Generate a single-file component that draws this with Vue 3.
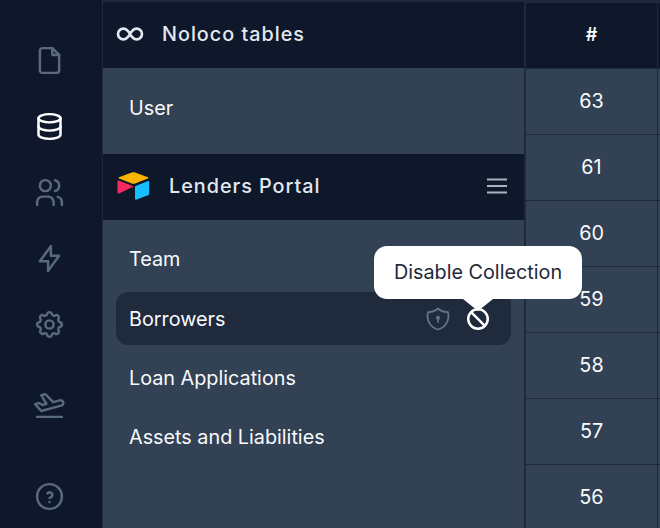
<script setup>
const rows = [63, 61, 60, 59, 58, 57, 56]
</script>

<template>
  <div class="app">
    <nav class="nav">
      <div class="slot">
        <svg class="ic" viewBox="0 0 24 24"><path d="M14 3v4a1 1 0 0 0 1 1h4" /><path d="M17 21h-10a2 2 0 0 1 -2 -2v-14a2 2 0 0 1 2 -2h7l5 5v11a2 2 0 0 1 -2 2z" /></svg>
      </div>
      <div class="slot active">
        <svg class="ic" viewBox="0 0 24 24"><ellipse cx="12" cy="6" rx="8" ry="3" /><path d="M4 6v6a8 3 0 0 0 16 0v-6" /><path d="M4 12v6a8 3 0 0 0 16 0v-6" /></svg>
      </div>
      <div class="slot">
        <svg class="ic" viewBox="0 0 24 24"><circle cx="9" cy="7" r="4" /><path d="M3 21v-2a4 4 0 0 1 4 -4h4a4 4 0 0 1 4 4v2" /><path d="M16 3.13a4 4 0 0 1 0 7.75" /><path d="M21 21v-2a4 4 0 0 0 -3 -3.85" /></svg>
      </div>
      <div class="slot">
        <svg class="ic" viewBox="0 0 24 24"><path d="M13 3v7h6l-8 11v-7h-6l8 -11" /></svg>
      </div>
      <div class="slot">
        <svg class="ic" viewBox="0 0 24 24"><path d="M10.325 4.317c.426 -1.756 2.924 -1.756 3.35 0a1.724 1.724 0 0 0 2.573 1.066c1.543 -.94 3.31 .826 2.37 2.37a1.724 1.724 0 0 0 1.065 2.572c1.756 .426 1.756 2.924 0 3.35a1.724 1.724 0 0 0 -1.066 2.573c.94 1.543 -.826 3.31 -2.37 2.37a1.724 1.724 0 0 0 -2.572 1.065c-.426 1.756 -2.924 1.756 -3.35 0a1.724 1.724 0 0 0 -2.573 -1.066c-1.543 .94 -3.31 -.826 -2.37 -2.37a1.724 1.724 0 0 0 -1.065 -2.572c-1.756 -.426 -1.756 -2.924 0 -3.35a1.724 1.724 0 0 0 1.066 -2.573c-.94 -1.543 .826 -3.31 2.37 -2.37c1 .608 2.296 .07 2.572 -1.065z" /><circle cx="12" cy="12" r="3" /></svg>
      </div>
      <div class="slot plane">
        <svg class="ic" viewBox="0 0 24 24"><path d="M14.639 10.258l4.83 -1.294a2 2 0 1 1 1.035 3.863l-14.489 3.883l-4.45 -5.02l2.897 -.776l2.45 1.414l2.897 -.776l-3.743 -6.244l2.898 -.777l5.675 5.727" /><path d="M3 21h18" /></svg>
      </div>
      <div class="slot help">
        <svg class="ic" viewBox="0 0 24 24"><circle cx="12" cy="12" r="9" /><path d="M12 16v.01" /><path d="M12 13a2 2 0 0 0 .914 -3.782a1.98 1.98 0 0 0 -2.414 .483" /></svg>
      </div>
    </nav>

    <section class="panel">
      <header class="head">
        <svg class="inf" viewBox="0 0 24 24"><path d="M9.828 9.172a4 4 0 1 0 0 5.656a10 10 0 0 0 2.172 -2.828a10 10 0 0 1 2.172 -2.828a4 4 0 1 1 0 5.656a10 10 0 0 1 -2.172 -2.828a10 10 0 0 0 -2.172 -2.828" /></svg>
        <span>Noloco tables</span>
      </header>
      <div class="list first">
        <div class="row">User</div>
      </div>
      <header class="head second">
        <svg class="logo" viewBox="0 0 32 28">
          <path d="M14.3 .5 1.6 5.2c-.7.3-.7 1 0 1.3l12.8 5c1 .4 2.2.4 3.2 0l12.8-5c.7-.3.7-1 0-1.3L17.7.5c-1.100-.4-2.300-.4-3.400 0z" fill="#fcb400" />
          <path d="M17.500 14.700v12.300c0 .6.600 1 1.100.8l12.500-4.900c.3-.1.600-.5.600-.8V9.800c0-.6-.6-1-1.100-.8l-12.500 4.900c-.400.100-.600.400-.600.800z" fill="#18bfff" />
          <path d="M14.300 15.300 10.400 17.200 1.500 21.500c-.6.300-1.500-.2-1.500-.8V9.200c0-.2.100-.4.300-.5.100-.1.300-.2.400-.2.200 0 .3 0 .5.100l13.900 5.500c.7.300.8 1.200.2 1.500z" fill="#f82b60" />
        </svg>
        <span class="title">Lenders Portal</span>
        <svg class="menu" viewBox="0 0 20 16"><path d="M0 1.500h20M0 8h20M0 14.500h20" /></svg>
      </header>
      <div class="list">
        <div class="row team">Team</div>
        <div class="row selected">
          <span>Borrowers</span>
          <svg class="shield" viewBox="0 0 24 24"><path d="M12 3a12 12 0 0 0 8.500 3a12 12 0 0 1 -8.500 15a12 12 0 0 1 -8.500 -15a12 12 0 0 0 8.500 -3" /><circle cx="12" cy="11" r="1" /><path d="M12 12v2.500" /></svg>
          <svg class="ban" viewBox="0 0 24 24"><circle cx="12" cy="12" r="9" /><path d="M5.700 5.700l12.600 12.600" /></svg>
          <div class="tip">Disable Collection</div>
        </div>
        <div class="row">Loan Applications</div>
        <div class="row">Assets and Liabilities</div>
      </div>
    </section>

    <section class="table">
      <div class="col">
        <div class="cell hd">#</div>
        <div v-for="r in rows" :key="r" class="cell">{{ r }}</div>
      </div>
      <div class="col rest">
        <div class="cell hd"></div>
        <div v-for="r in rows" :key="r" class="cell"></div>
      </div>
    </section>
  </div>
</template>

<style>
html, body { margin: 0; overflow: hidden; }
</style>

<style scoped>
.app {
  display: flex;
  width: 660px;
  height: 528px;
  overflow: hidden;
  background: #334155;
  font-family: Inter, "Liberation Sans", sans-serif;
  color: #f8fafc;
}
.nav {
  flex: 0 0 103px;
  height: 528px;
  box-sizing: border-box;
  padding: 27px 4px 0 0;
  background: #0e182a;
  display: flex;
  flex-direction: column;
  border-right: 1px solid #1e293b;
}
.slot {
  flex: 0 0 66px;
  display: flex;
  align-items: center;
  justify-content: center;
  color: #596980;
}
.active { color: #fff; }
.plane { margin-top: 14px; }
.help { margin-top: 26px; }
.ic {
  width: 33px;
  height: 33px;
  fill: none;
  stroke: currentColor;
  stroke-width: 1.8;
  stroke-linecap: round;
  stroke-linejoin: round;
}
.panel {
  flex: 0 0 421px;
  box-sizing: border-box;
  padding-top: 2px;
  background: linear-gradient(#1e293b 2px, #334155 2px);
}
.head {
  box-sizing: border-box;
  height: 66px;
  background: #0e182a;
  display: flex;
  align-items: center;
  padding: 0 17px 3px 11px;
  font-size: 19.8px;
  font-weight: 500;
  letter-spacing: 0.99px;
  color: #e2e8f0;
}
.head.second { padding: 0 17px 2px 14px; }
.inf {
  width: 32px;
  height: 32px;
  margin-right: 16px;
  fill: none;
  stroke: #e2e8f0;
  stroke-width: 2;
}
.logo { width: 33px; height: 28px; margin-right: 19px; }
.title { flex: 1; }
.menu {
  width: 20px;
  height: 16px;
  fill: none;
  stroke: #a9b1bd;
  stroke-width: 2;
}
.list {
  padding: 13px;
  display: flex;
  flex-direction: column;
  gap: 6px;
}
.list.first { height: 86px; box-sizing: border-box; }
.row {
  box-sizing: border-box;
  position: relative;
  height: 53px;
  display: flex;
  align-items: center;
  padding: 0 13px;
  border-radius: 12px;
  font-size: 19.8px;
}
.row.team { padding-bottom: 2px; }
.row.selected { background: #1f2a3c; }
.row.selected > span { flex: 1; }
.shield {
  width: 28px;
  height: 28px;
  margin-top: 1px;
  fill: none;
  stroke: #64748b;
  stroke-width: 1.5;
  stroke-linecap: round;
  stroke-linejoin: round;
}
.ban {
  width: 26px;
  height: 26px;
  margin-top: 1px;
  margin-left: 13px;
  margin-right: 7px;
  fill: none;
  stroke: #fff;
  stroke-width: 2.3;
  stroke-linecap: round;
}
.tip {
  position: absolute;
  left: 258px;
  top: -46px;
  box-sizing: border-box;
  width: 208px;
  height: 53px;
  padding-bottom: 1px;
  display: flex;
  align-items: center;
  justify-content: center;
  background: #fff;
  border-radius: 13px;
  color: #1f2937;
  font-size: 19.8px;
}
.tip::after {
  content: "";
  position: absolute;
  left: 89px;
  top: 53px;
  border-style: solid;
  border-width: 12px 15px 0;
  border-color: #fff transparent transparent;
}
.table {
  flex: 1;
  display: flex;
  background: #1e293b;
  padding-top: 3px;
  padding-left: 2px;
  gap: 1px;
}
.col {
  flex: 0 0 131px;
  display: flex;
  flex-direction: column;
}
.col.rest { flex: 1; }
.cell {
  box-sizing: border-box;
  flex: 0 0 65px;
  margin-bottom: 1px;
  padding-bottom: 2px;
  display: flex;
  align-items: center;
  justify-content: center;
  background: #334155;
  font-size: 19.8px;
}
.cell.hd {
  background: #0e182a;
  font-size: 18px;
  font-weight: 600;
}
</style>
